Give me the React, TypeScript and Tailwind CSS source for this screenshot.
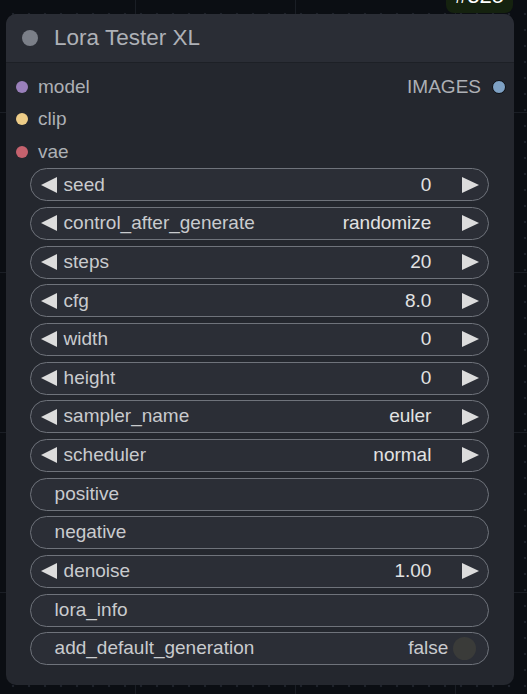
import React from 'react';

const font = { fontFamily: '"Liberation Sans", Arial, sans-serif' };

const LeftArrow = () => (
  <svg width="16" height="16" viewBox="0 0 16 16" className="shrink-0">
    <polygon points="16,0 16,16 0,8" fill="#dcdcdc" />
  </svg>
);

const RightArrow = () => (
  <svg width="17" height="16" viewBox="0 0 17 16" className="shrink-0">
    <polygon points="0,0 0,16 17,8" fill="#dcdcdc" />
  </svg>
);

const NumberWidget = ({ label, value }: { label: string; value: string }) => (
  <div className="flex h-[33px] items-center rounded-full border-[1.5px] border-[#6f737b] bg-[#2b2e36] pl-[10px] pr-[9px]">
    <LeftArrow />
    <span className="ml-[7px] text-[#c9cbce]">{label}</span>
    <span className="ml-auto text-[#e2e2e2]">{value}</span>
    <span className="ml-[31px]">
      <RightArrow />
    </span>
  </div>
);

const TextWidget = ({ label }: { label: string }) => (
  <div className="flex h-[33px] items-center rounded-full border-[1.5px] border-[#6f737b] bg-[#2b2e36] pl-[24px]">
    <span className="text-[#c9cbce]">{label}</span>
  </div>
);

const ToggleWidget = ({ label, value }: { label: string; value: string }) => (
  <div className="flex h-[33px] items-center rounded-full border-[1.5px] border-[#6f737b] bg-[#2b2e36] pl-[24px] pr-[12px]">
    <span className="text-[#c9cbce]">{label}</span>
    <span className="ml-auto text-[#c9cbce]">{value}</span>
    <span className="ml-[5px] h-[23px] w-[23px] rounded-full bg-[#3a3b39]" />
  </div>
);

const inputs = [
  { name: 'model', color: 'bg-[#9a80bb]' },
  { name: 'clip', color: 'bg-[#eecd88]' },
  { name: 'vae', color: 'bg-[#c5626e]' },
];

export default function App() {
  return (
    <div
      style={font}
      className="relative h-[694px] w-full overflow-hidden bg-[#0b0e13] bg-[image:linear-gradient(to_right,#1a1e25_1px,transparent_1px),linear-gradient(to_bottom,#1a1e25_1px,transparent_1px),radial-gradient(circle,#1e222a_1.2px,transparent_1.6px)] bg-[size:160px_160px,160px_160px,16px_16px] bg-[position:-25px_-48px,-25px_-48px,5px_6px] pt-[14px] pl-[6px] text-[19px]"
    >
      <div className="absolute left-[446px] top-[-10px] flex h-[23px] w-[67px] items-end justify-center rounded-[8px] bg-[#15220f] pb-[6px] text-[22px] leading-[22px] text-white">
        #325
      </div>

      <div className="flex h-[671px] w-[508px] flex-col overflow-hidden rounded-[10px] bg-[#24272e]">
        <div className="flex h-[49px] items-center border-b border-[#1d2026] bg-[#2a2d35] pl-[16px]">
          <span className="h-[16px] w-[16px] rounded-full bg-[#7b7f88]" />
          <span className="ml-[16px] text-[22.5px] text-[#aeb1b7]">Lora Tester XL</span>
        </div>

        <div className="flex flex-col pt-[7.5px]">
          {inputs.map((inp, i) => (
            <div key={inp.name} className="flex h-[32.6px] items-center pl-[10px] pr-[8px]">
              <span className={`h-[12px] w-[12px] rounded-full ${inp.color}`} />
              <span className="ml-[10px] text-[#adb0b5]">{inp.name}</span>
              {i === 0 && (
                <>
                  <span className="ml-auto text-[#adb0b5]">IMAGES</span>
                  <span className="ml-[11px] h-[14px] w-[14px] rounded-full border-[1.5px] border-[#0c0d10] bg-[#7ea1c4]" />
                </>
              )}
            </div>
          ))}
        </div>

        <div className="flex flex-col gap-[5.67px] pl-[23.6px] pr-[24.6px]">
          <NumberWidget label="seed" value="0" />
          <NumberWidget label="control_after_generate" value="randomize" />
          <NumberWidget label="steps" value="20" />
          <NumberWidget label="cfg" value="8.0" />
          <NumberWidget label="width" value="0" />
          <NumberWidget label="height" value="0" />
          <NumberWidget label="sampler_name" value="euler" />
          <NumberWidget label="scheduler" value="normal" />
          <TextWidget label="positive" />
          <TextWidget label="negative" />
          <NumberWidget label="denoise" value="1.00" />
          <TextWidget label="lora_info" />
          <ToggleWidget label="add_default_generation" value="false" />
        </div>
      </div>
    </div>
  );
}
